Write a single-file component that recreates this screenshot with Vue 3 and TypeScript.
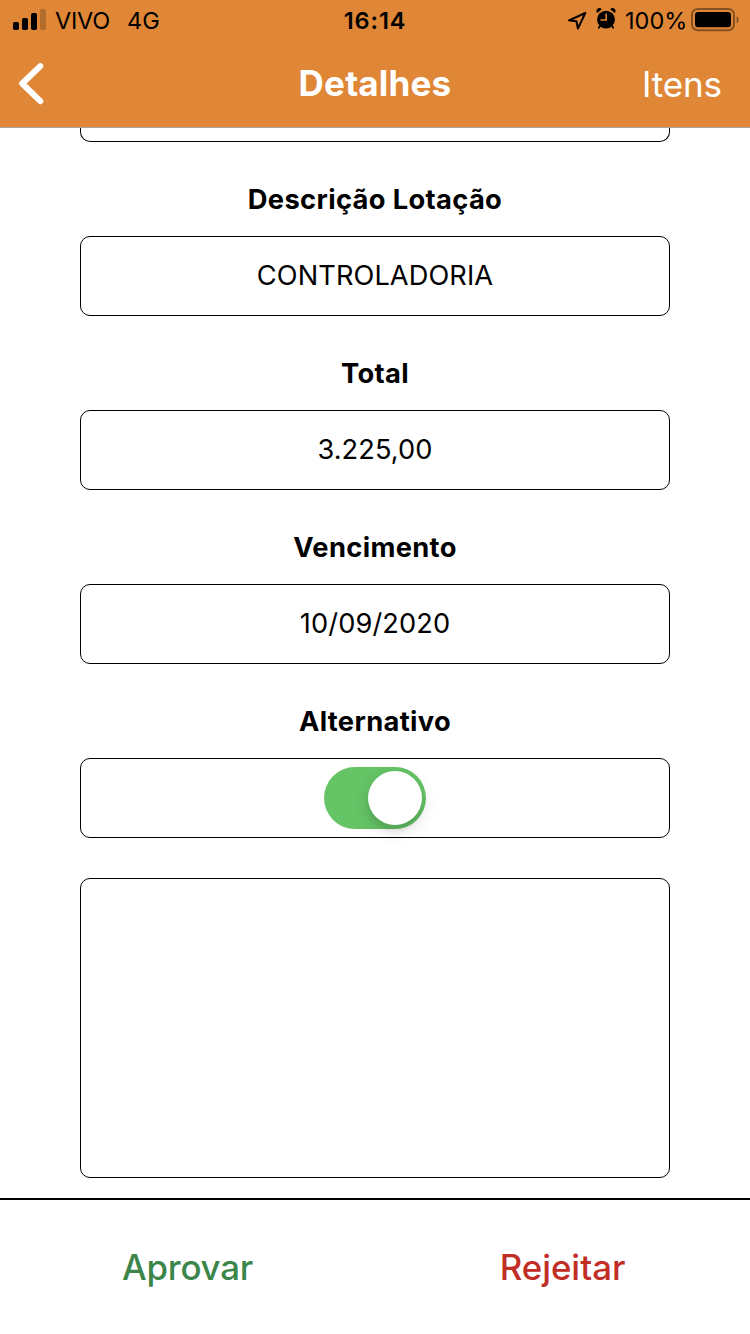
<script setup lang="ts">
import { ref } from 'vue'

interface Field {
  id: string
  label: string
  value: string
}

const fields: Field[] = [
  { id: 'lotacao', label: 'Descrição Lotação', value: 'CONTROLADORIA' },
  { id: 'total', label: 'Total', value: '3.225,00' },
  { id: 'vencimento', label: 'Vencimento', value: '10/09/2020' },
]

const alternativo = ref<boolean>(true)
</script>

<template>
  <div class="screen">
    <header class="header">
      <div class="status">
        <div class="status-left">
          <svg class="signal" width="34" height="22" viewBox="0 0 34 22">
            <rect x="0" y="13" width="6" height="8" rx="1.8" />
            <rect x="9" y="9" width="6" height="12" rx="1.8" />
            <rect x="18" y="4" width="6" height="17" rx="1.8" />
            <rect x="27" y="0" width="6" height="21" rx="1.8" opacity="0.2" />
          </svg>
          <span class="carrier">VIVO</span>
          <span class="network">4G</span>
        </div>
        <span class="clock">16:14</span>
        <div class="status-right">
          <svg class="location" width="20" height="20" viewBox="0 0 20 20">
            <path d="M18.3 2 L2 9.3 L9.5 10.3 L10.9 17.6 Z" fill="none" stroke="#000" stroke-width="2" stroke-linejoin="round" />
          </svg>
          <svg class="alarm" width="20" height="22" viewBox="0 0 20 22">
            <circle cx="10" cy="11.6" r="8.9" />
            <path d="M1.2 5 A2.9 2.9 0 0 1 5.8 1.2 Z M18.8 5 A2.9 2.9 0 0 0 14.2 1.2 Z" />
            <path d="M4 18 L2.8 19.7 M16 18 L17.2 19.7" stroke="#000" stroke-width="1.8" stroke-linecap="round" />
            <path d="M10.2 6 V12 H5" fill="none" stroke="#df8736" stroke-width="1.6" stroke-linecap="round" />
          </svg>
          <span class="percent">100%</span>
          <svg class="battery" width="48" height="24" viewBox="0 0 48 24">
            <rect x="1" y="1" width="42" height="21.2" rx="5.6" fill="none" stroke="#000" stroke-opacity="0.4" stroke-width="2" />
            <rect x="4" y="4" width="36" height="15.2" rx="3.2" />
            <path d="M45.6 8 C48.3 9.5 48.3 13.8 45.6 15.3 Z" opacity="0.4" />
          </svg>
        </div>
      </div>
      <nav class="nav">
        <button class="back" type="button" aria-label="Voltar">
          <svg width="28" height="44" viewBox="0 0 28 44">
            <path d="M22.3 4.1 L4.2 21.5 L22.3 39.2" fill="none" stroke="#fff" stroke-width="6" stroke-linecap="round" stroke-linejoin="round" />
          </svg>
        </button>
        <h1 class="title">Detalhes</h1>
        <button class="items" type="button">Itens</button>
      </nav>
    </header>

    <main class="form">
      <div class="tail"></div>
      <section v-for="field in fields" :key="field.id" class="field">
        <h2 class="label">{{ field.label }}</h2>
        <div class="box">{{ field.value }}</div>
      </section>
      <section class="field">
        <h2 class="label">Alternativo</h2>
        <div class="box box-switch">
          <button class="switch" :class="{ on: alternativo }" type="button" role="switch" aria-label="Alternativo" :aria-checked="alternativo" @click="alternativo = !alternativo">
            <span class="knob"></span>
          </button>
        </div>
      </section>
      <div class="notes"></div>
    </main>

    <footer class="actions">
      <button class="approve" type="button">Aprovar</button>
      <button class="reject" type="button">Rejeitar</button>
    </footer>
  </div>
</template>

<style>
body {
  margin: 0;
  background: #fff;
}
</style>

<style scoped>
.screen {
  width: 750px;
  height: 1334px;
  display: flex;
  flex-direction: column;
  overflow: hidden;
  background: #fff;
  color: #000;
  font-family: Inter, "Liberation Sans", sans-serif;
}
button {
  border: 0;
  padding: 0;
  background: none;
  font: inherit;
  letter-spacing: inherit;
}
svg {
  display: block;
  flex: none;
}
.header {
  box-sizing: border-box;
  height: 128px;
  flex: none;
  background: #df8736;
  border-bottom: 1px solid #aaa5a2;
}
.status {
  height: 40px;
  display: grid;
  grid-template-columns: 1fr auto 1fr;
  font-size: 23.5px;
  line-height: 42px;
}
.status-left,
.status-right {
  display: flex;
}
.status-left {
  padding-left: 13px;
}
.status-right {
  justify-content: flex-end;
  padding-right: 11px;
}
.signal {
  margin-top: 9px;
}
.carrier {
  margin-left: 8px;
  width: 72px;
  letter-spacing: -0.2px;
}
.clock {
  font-weight: 600;
  letter-spacing: 0.9px;
}
.location {
  margin: 11px 9px 0 0;
}
.alarm {
  margin: 8px 9px 0 0;
}
.percent {
  width: 66px;
}
.battery {
  margin-top: 8px;
}
.nav {
  height: 87px;
  display: grid;
  grid-template-columns: 1fr auto 1fr;
  align-items: center;
  color: #fff;
}
.back {
  justify-self: start;
  margin-left: 18px;
}
.title {
  margin: 0 0 2px;
  font-size: 35px;
  font-weight: 700;
  line-height: 44px;
  letter-spacing: 0.2px;
}
.items {
  justify-self: end;
  margin: 1px 28px 0 0;
  color: #fff;
  font-size: 35px;
  line-height: 44px;
  letter-spacing: -0.1px;
}
.form {
  flex: none;
  height: 1070px;
  padding: 0 80px;
}
.tail {
  box-sizing: border-box;
  height: 14px;
  border: 1px solid #000;
  border-top: 0;
  border-radius: 0 0 10px 10px;
}
.field {
  padding-top: 41px;
}
.label {
  margin: 0 0 19px;
  font-size: 27.3px;
  line-height: 34px;
  font-weight: 700;
  letter-spacing: 0.35px;
  text-align: center;
}
.box {
  box-sizing: border-box;
  height: 80px;
  padding-bottom: 1px;
  display: flex;
  align-items: center;
  justify-content: center;
  border: 1px solid #000;
  border-radius: 10px;
  font-size: 27.2px;
  letter-spacing: 0.1px;
}
.box-switch {
  padding-bottom: 0;
}
.switch {
  box-sizing: border-box;
  width: 102px;
  height: 62px;
  padding: 4px;
  display: flex;
  border-radius: 31px;
  background: #e9e9ea;
}
.switch.on {
  justify-content: flex-end;
  background: #65c466;
}
.knob {
  width: 54px;
  height: 54px;
  border-radius: 50%;
  background: #fff;
  box-shadow: 0 6px 16px rgba(0, 0, 0, 0.15), 0 6px 4px rgba(0, 0, 0, 0.06);
}
.notes {
  box-sizing: border-box;
  height: 300px;
  margin-top: 40px;
  border: 1px solid #000;
  border-radius: 10px;
}
.actions {
  flex: 1;
  display: grid;
  grid-template-columns: 1fr 1fr;
  border-top: 2px solid #000;
  font-size: 34.8px;
  font-weight: 500;
}
.approve {
  color: #3b854a;
  letter-spacing: -0.2px;
}
.reject {
  color: #c12e26;
}
</style>
